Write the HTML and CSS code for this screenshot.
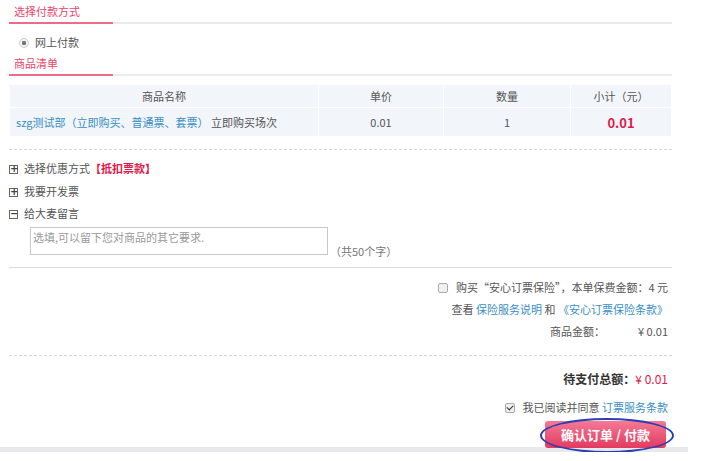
FILE: index.html
```html
<!DOCTYPE html>
<html lang="zh-CN">
<head>
    <meta charset="UTF-8">
    <title>确认订单</title>
    <link rel="stylesheet" href="styles.css">
</head>
<body>
<div class="page">
    <div class="sec-title"><span>选择付款方式</span></div>
    <div class="pay-way"><span class="radio"></span>网上付款</div>

    <div class="sec-title"><span>商品清单</span></div>
    <table class="goods">
        <tr class="head">
            <td class="c-name">商品名称</td>
            <td class="c-price">单价</td>
            <td class="c-num">数量</td>
            <td class="c-sum">小计（元）</td>
        </tr>
        <tr>
            <td class="c-name left"><a href="#">szg测试部（立即购买、普通票、套票）</a> 立即购买场次</td>
            <td>0.01</td>
            <td>1</td>
            <td class="red strong">0.01</td>
        </tr>
    </table>
    <div class="dash"></div>

    <div class="opts">
        <div class="opt"><span class="box">+</span>选择优惠方式<b class="red">【抵扣票款】</b></div>
        <div class="opt"><span class="box">+</span>我要开发票</div>
        <div class="opt"><span class="box">−</span>给大麦留言</div>
        <div class="msg">
            <div class="textarea">选填,可以留下您对商品的其它要求.</div>
            <span class="count">（共50个字）</span>
        </div>
    </div>
    <div class="solid"></div>

    <div class="summary first">
        <div class="line"><span class="check"></span>购买“安心订票保险”，本单保费金额：4 元</div>
        <div class="line">查看 <a href="#">保险服务说明</a> 和 <a href="#">《安心订票保险条款》</a></div>
        <div class="line">商品金额：<span class="amount">¥ 0.01</span></div>
    </div>
    <div class="dash low"></div>

    <div class="summary">
        <div class="line total">待支付总额：<span class="red">¥ 0.01</span></div>
        <div class="line"><span class="check on"></span>我已阅读并同意 <a href="#">订票服务条款</a></div>
    </div>
    <div class="bottom">
        <div class="btn-wrap"><button class="btn">确认订单 / 付款</button></div>
    </div>
</div>
</body>
</html>
```

FILE: styles.css
```css
body {
    margin: 0;
    background: #fff;
    font-family: "Noto Sans CJK SC", "Noto Sans", sans-serif;
    font-size: 11px;
    color: #555;
}
a { color: #3a8ec4; text-decoration: none; }
.red { color: #e0194a; }
.strong { font-weight: bold; font-size: 13px; }

.page {
    width: 663px;
    margin-left: 9px;
}

.sec-title {
    border-bottom: 2px solid #ebebeb;
    height: 24px;
    box-sizing: border-box;
}
.sec-title span {
    display: inline-block;
    width: 104px;
    height: 24px;
    box-sizing: border-box;
    padding: 4px 0 0 5px;
    color: #e8466a;
    border-bottom: 2px solid #ee6b84;
    line-height: 15px;
}
.pay-way {
    padding: 9px 0 0 10px;
    height: 19px;
    line-height: 18px;
}
.radio {
    display: inline-block;
    width: 8px;
    height: 8px;
    border: 1px solid #ccc;
    border-radius: 50%;
    margin-right: 6px;
    vertical-align: -1px;
    background: radial-gradient(circle, #777 0 2px, #f3f3f3 2.5px);
}

.goods {
    width: 663px;
    border-collapse: collapse;
    table-layout: fixed;
    margin-top: 8px;
    text-align: center;
}
.goods td {
    background: #f2f6fb;
    border: 1px solid #fff;
    height: 22px;
    padding: 0;
}
.goods tr:not(.head) td { height: 28px; }
.c-name { width: 308px; }
.c-price { width: 124px; }
.c-num { width: 126px; }
.goods td.left { text-align: left; padding-left: 6px; }

.dash {
    border-top: 1px dashed #d6d6d6;
    margin-top: 12px;
}
.dash.low { margin-top: 11px; }
.solid {
    border-top: 1px solid #ddd;
    margin-top: 12px;
}

.opts { padding: 9px 0 0 0; }
.opt {
    height: 22.5px;
    line-height: 18px;
}
.box {
    display: inline-block;
    width: 7px;
    height: 7px;
    border: 1px solid #666;
    line-height: 6px;
    font-size: 10px;
    text-align: center;
    color: #444;
    margin-right: 6px;
    vertical-align: 1px;
    font-family: "DejaVu Sans", sans-serif;
    font-weight: bold;
}
.msg {
    display: flex;
    align-items: flex-end;
    padding-left: 21px;
}
.textarea {
    width: 292px;
    height: 24px;
    border: 1px solid #c8c8c8;
    padding: 1px 2px;
    color: #999;
    line-height: 16px;
}
.count {
    margin-left: 2px;
    margin-bottom: -4px;
    color: #777;
}

.summary {
    padding: 12px 4px 0 0;
    text-align: right;
}
.summary.first { padding-top: 10px; }
.summary .line {
    height: 22px;
    line-height: 18px;
}
.amount {
    display: inline-block;
    width: 63px;
}
.check {
    display: inline-block;
    width: 8px;
    height: 8px;
    border: 1px solid #aaa;
    border-radius: 2px;
    background: #f0f0f0;
    margin-right: 8px;
    vertical-align: -1px;
    position: relative;
}
.check.on::after {
    content: "";
    position: absolute;
    left: 2px;
    top: 0;
    width: 3px;
    height: 5px;
    border: solid #333;
    border-width: 0 1.5px 1.5px 0;
    transform: rotate(45deg);
}
.total {
    font-weight: bold;
    font-size: 12px;
    color: #333;
    margin-top: 2px;
    margin-bottom: 6px;
}
.total .red { font-weight: normal; }

.bottom {
    width: 688px;
    border-bottom: 5px solid #e8e9ed;
    margin: 1px 0 0 -9px;
    height: 26px;
    box-sizing: content-box;
}
.btn-wrap {
    position: relative;
    width: 122px;
    margin-left: 545px;
}
.btn-wrap::after {
    content: "";
    position: absolute;
    left: -5px;
    top: -3px;
    width: 130px;
    height: 31px;
    border: 2px solid #2d3fb0;
    border-radius: 50%;
}
.btn {
    width: 121px;
    height: 27px;
    border: none;
    border-radius: 3px;
    background: linear-gradient(#f47a95, #e33a60);
    color: #fff;
    font-family: inherit;
    font-size: 13px;
    font-weight: bold;
    padding: 0;
}
```
